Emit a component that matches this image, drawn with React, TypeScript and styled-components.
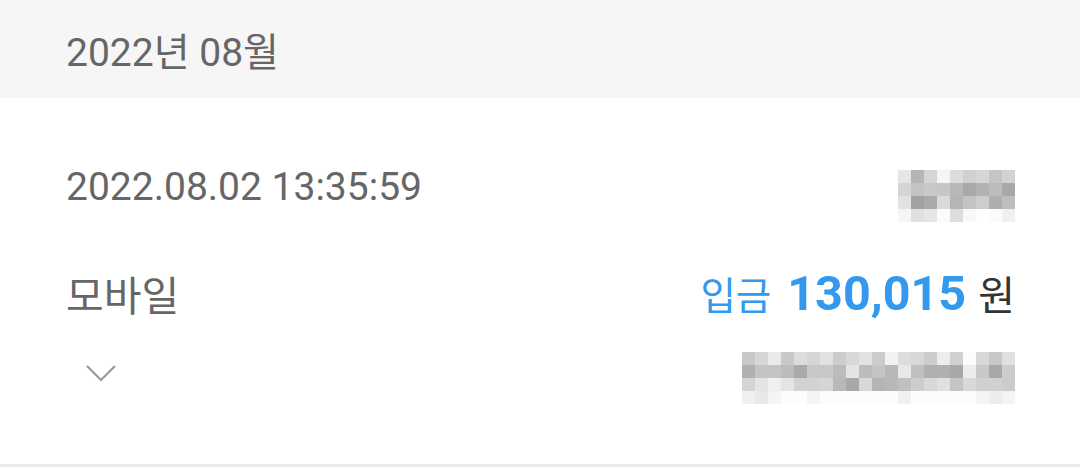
import React from "react";
import styled, { createGlobalStyle } from "styled-components";

const Global = createGlobalStyle`
  html, body { margin: 0; padding: 0; background: #ffffff; }
  body { font-family: Roboto, "Noto Sans CJK KR", sans-serif; }
`;

const Page = styled.div`
  width: 1080px;
  height: 467px;
  display: flex;
  flex-direction: column;
  background: #fff;
  overflow: hidden;
`;

const MonthHeader = styled.div`
  height: 98px;
  background: #f6f6f6;
  display: flex;
  align-items: center;
  padding-left: 66px;
  box-sizing: border-box;
  font-size: 39px;
  color: #666666;
`;

const Entry = styled.div`
  flex: 1;
  padding: 0 65px 0 66px;
  display: flex;
  flex-direction: column;
  border-bottom: 3px solid #ebebeb;
`;

const Row = styled.div<{ $h: number }>`
  height: ${(p) => p.$h}px;
  display: flex;
  align-items: center;
  justify-content: space-between;
`;

const Stamp = styled.span`
  font-size: 39px;
  color: #666666;
`;

const Label = styled.span`
  font-size: 41px;
  color: #666666;
`;

const Amount = styled.div`
  display: flex;
  align-items: baseline;
`;

const Kind = styled.span`
  color: #3399ee;
  font-size: 38.5px;
  margin-right: 16px;
`;

const Value = styled.span`
  color: #3399ee;
  font-size: 48.5px;
  font-weight: 700;
  margin-right: 12px;
`;

const Unit = styled.span`
  color: #333333;
  font-size: 40px;
`;

const Mosaic = styled.div<{ $cols: number; $shift: number }>`
  display: grid;
  grid-template-columns: repeat(${(p) => p.$cols}, 13px);
  grid-auto-rows: 13px;
  margin-top: ${(p) => p.$shift}px;
`;

const Cell = styled.div`
  width: 13px;
  height: 13px;
`;

const Chevron = styled.svg`
  width: 32px;
  height: 18px;
  margin-left: 19px;
  margin-top: 6px;
`;

const toHex = (v: number) => {
  const h = v.toString(16).padStart(2, "0");
  return `#${h}${h}${h}`;
};

const block1 = [
  [0xe6, 0xb5, 0xd5, 0xf5, 0xdc, 0xd0, 0xd6, 0xc5, 0xd2],
  [0xd5, 0xc3, 0xc8, 0xc6, 0xb8, 0xa9, 0xb2, 0xbc, 0xa8],
  [0xe2, 0xa2, 0xaa, 0xda, 0xb5, 0xc3, 0xcd, 0xae, 0xbd],
  [0xf6, 0xe0, 0xe6, 0xfb, 0xdd, 0xf8, 0xfe, 0xfb, 0xf0],
];

const block2 = [
  [0xc8, 0xd6, 0xea, 0xc8, 0xdc, 0xd6, 0xe2, 0xcc, 0xd8, 0xe2, 0xcc, 0xf2, 0xdc, 0xd8, 0xcc, 0xec, 0xd0, 0xfc, 0xd8, 0xc8, 0xe0],
  [0xb0, 0xc4, 0xc4, 0xbc, 0xaa, 0xc8, 0xc8, 0xbc, 0xe4, 0xbc, 0xc4, 0xb8, 0xe8, 0xc0, 0xb0, 0xb0, 0xa8, 0xec, 0xc8, 0xa8, 0xcc],
  [0xd4, 0xe4, 0xf0, 0xe4, 0xd2, 0xd2, 0xd6, 0xb8, 0xa8, 0xd8, 0xb4, 0xb8, 0xc0, 0xcc, 0xd8, 0xe0, 0xc4, 0xd8, 0xd0, 0xd0, 0xcc],
  [0xf0, 0xe8, 0xf4, 0xfc, 0xfc, 0xf4, 0xfc, 0xfc, 0xfc, 0xfc, 0xfc, 0xfc, 0xf0, 0xfc, 0xfc, 0xfc, 0xfc, 0xfc, 0xf4, 0xec, 0xf4],
];

const Pixelated = ({ data, shift }: { data: number[][]; shift: number }) => (
  <Mosaic $cols={data[0].length} $shift={shift}>
    {data.flatMap((row, r) =>
      row.map((v, c) => <Cell key={`${r}-${c}`} style={{ background: toHex(v) }} />)
    )}
  </Mosaic>
);

export default function App() {
  return (
    <>
      <Global />
      <Page>
        <MonthHeader>2022년 08월</MonthHeader>
        <Entry>
          <Row $h={178}>
            <Stamp>2022.08.02 13:35:59</Stamp>
            <Pixelated data={block1} shift={17} />
          </Row>
          <Row $h={34}>
            <Label>모바일</Label>
            <Amount>
              <Kind>입금</Kind>
              <Value>130,015</Value>
              <Unit>원</Unit>
            </Amount>
          </Row>
          <Row $h={120}>
            <Chevron viewBox="0 0 32 18" fill="none">
              <path d="M2 2 L16 16 L30 2" stroke="#999999" strokeWidth="2.2" />
            </Chevron>
            <Pixelated data={block2} shift={16} />
          </Row>
        </Entry>
      </Page>
    </>
  );
}
